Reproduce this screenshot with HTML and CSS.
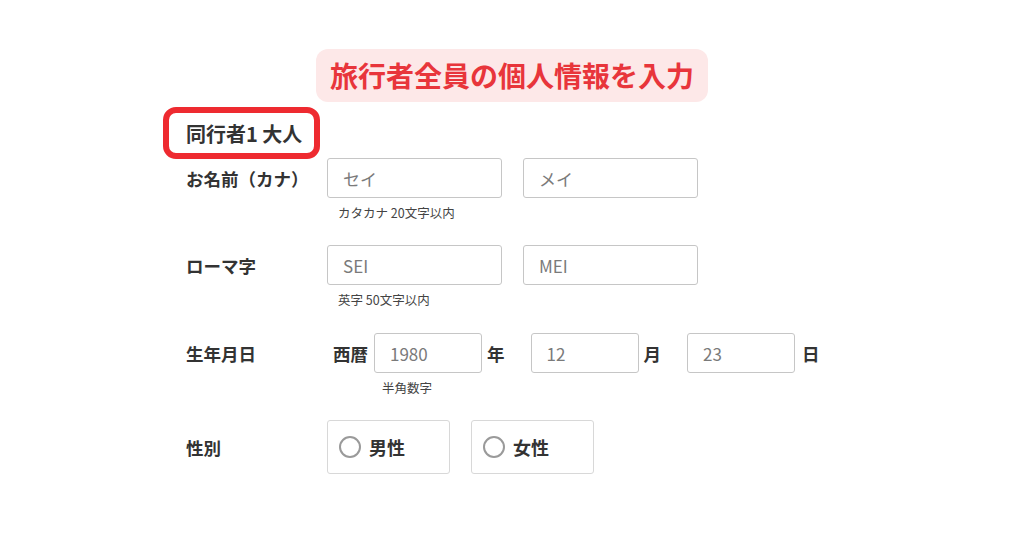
FILE: index.html
```html
<!DOCTYPE html>
<html lang="ja">
<head>
<meta charset="utf-8">
<title>旅行者情報入力</title>
<link rel="stylesheet" href="styles.css">
</head>
<body>
<div class="page">
  <div class="banner-wrap">
    <div class="banner">旅行者全員の個人情報を入力</div>
  </div>
  <div class="traveler">
    <div class="traveler-title">同行者1 大人</div>
  </div>
  <div class="form">
    <div class="row">
      <div class="label">お名前（カナ）</div>
      <div class="fields">
        <div class="inputs">
          <div class="input w175"><span class="ph">セイ</span></div>
          <div class="input w175"><span class="ph">メイ</span></div>
        </div>
        <div class="hint">カタカナ 20文字以内</div>
      </div>
    </div>
    <div class="row row2">
      <div class="label">ローマ字</div>
      <div class="fields">
        <div class="inputs">
          <div class="input w175"><span class="ph">SEI</span></div>
          <div class="input w175"><span class="ph">MEI</span></div>
        </div>
        <div class="hint">英字 50文字以内</div>
      </div>
    </div>
    <div class="row">
      <div class="label">生年月日</div>
      <div class="fields date">
        <div class="date-line">
          <div class="dgroup">
            <span class="unit">西暦</span>
            <div class="input w108"><span class="ph">1980</span></div>
            <span class="unit">年</span>
          </div>
          <div class="dgroup">
            <div class="input w108"><span class="ph">12</span></div>
            <span class="unit">月</span>
          </div>
          <div class="dgroup">
            <div class="input w108"><span class="ph">23</span></div>
            <span class="unit">日</span>
          </div>
        </div>
        <div class="hint hint-date">半角数字</div>
      </div>
    </div>
    <div class="row">
      <div class="label tall">性別</div>
      <div class="fields">
        <div class="radios">
          <div class="radio"><span class="circle"></span><span class="rtext">男性</span></div>
          <div class="radio"><span class="circle"></span><span class="rtext">女性</span></div>
        </div>
      </div>
    </div>
  </div>
</div>
</body>
</html>
```

FILE: styles.css
```css
* { box-sizing: border-box; }
html, body { margin: 0; padding: 0; background: #ffffff; }
body {
  font-family: "Noto Sans CJK JP", "Noto Sans", sans-serif;
  color: #333333;
  width: 1024px;
  height: 538px;
  overflow: hidden;
}
.page { padding-top: 49px; }
.banner-wrap { display: flex; justify-content: center; }
.banner {
  background: #fde8e8;
  color: #e8353b;
  font-weight: 700;
  font-size: 28px;
  line-height: 53px;
  height: 53px;
  padding: 0 14px;
  border-radius: 12px;
  white-space: nowrap;
}
.traveler { margin-top: 5px; padding-left: 163px; }
.traveler-title {
  display: inline-flex;
  align-items: center;
  width: 157px;
  height: 52px;
  border: 6px solid #ee2a30;
  border-radius: 13px;
  padding-left: 17px;
  font-size: 20px;
  font-weight: 700;
  color: #333333;
  white-space: nowrap;
}
.form { padding-left: 186px; margin-top: -1px; }
.row { display: flex; align-items: flex-start; margin-bottom: 23px; }
.row2 { margin-bottom: 24px; }
.label {
  width: 141px;
  height: 40px;
  display: flex;
  align-items: center;
  font-size: 17.5px;
  font-weight: 700;
  white-space: nowrap;
}
.label.tall { height: 54px; }
.inputs { display: flex; gap: 21px; }
.input {
  height: 40px;
  border: 1px solid #c6c6c6;
  border-radius: 3px;
  display: flex;
  align-items: center;
  padding-left: 15px;
  background: #fff;
}
.w175 { width: 175px; }
.w108 { width: 108px; }
.ph { color: #7a7a7a; font-size: 17px; }
.hint {
  margin-top: 6px;
  height: 18px;
  line-height: 18px;
  font-size: 12.5px;
  color: #444444;
  padding-left: 11px;
}
.date { padding-left: 6px; }
.date-line { display: flex; align-items: center; gap: 26px; }
.dgroup { display: flex; align-items: center; gap: 5px; }
.dgroup .unit:first-child { margin-right: 1px; }
.dgroup:last-child .unit { margin-left: 2px; }
.unit { font-size: 17.5px; font-weight: 700; white-space: nowrap; }
.hint-date { padding-left: 49px; }
.radios { display: flex; gap: 21px; }
.radio {
  width: 123px;
  height: 54px;
  border: 1px solid #d8d8d8;
  border-radius: 3px;
  display: flex;
  align-items: center;
  padding-left: 11px;
  gap: 8px;
}
.circle {
  width: 22px;
  height: 22px;
  border: 2px solid #9a9a9a;
  border-radius: 50%;
  background: #fff;
  flex: none;
}
.rtext { font-size: 18px; font-weight: 700; }
```
